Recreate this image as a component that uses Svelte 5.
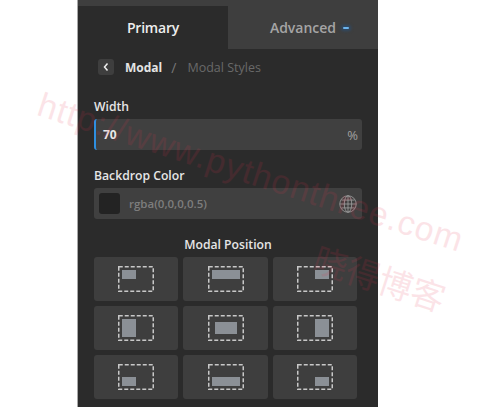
<script>
  const positions = [
    { name: "top-left", x: 4, y: 4, w: 14, h: 9 },
    { name: "top", x: 4, y: 4, w: 28, h: 9 },
    { name: "top-right", x: 18, y: 4, w: 14, h: 9 },
    { name: "left", x: 4, y: 4, w: 14, h: 18 },
    { name: "center", x: 7, y: 7, w: 22, h: 12 },
    { name: "right", x: 18, y: 4, w: 14, h: 18 },
    { name: "bottom-left", x: 4, y: 13, w: 14, h: 9 },
    { name: "bottom", x: 4, y: 13, w: 28, h: 9 },
    { name: "bottom-right", x: 18, y: 13, w: 14, h: 9 },
  ];
</script>

<div class="panel">
  <div class="tabs">
    <button class="tab active">Primary</button>
    <button class="tab">Advanced<span class="dot"></span></button>
  </div>

  <div class="crumbs">
    <button class="back" aria-label="Back">
      <svg width="8" height="10" viewBox="0 0 8 10"><path d="M5.500 1.500 2.500 5l3 3.500" fill="none" stroke="#eee" stroke-width="1.500" /></svg>
    </button>
    <span class="crumb-current">Modal</span>
    <span class="crumb-sep">/</span>
    <span class="crumb-next">Modal Styles</span>
  </div>

  <div class="label">Width</div>
  <div class="field width-field">
    <span class="value">70</span>
    <span class="unit">%</span>
  </div>

  <div class="label">Backdrop Color</div>
  <div class="field color-field">
    <span class="swatch"></span>
    <span class="color-text">rgba(0,0,0,0.5)</span>
    <svg class="globe" width="18" height="18" viewBox="0 0 17 17" fill="none" stroke="#a8a8a8" stroke-width="0.700">
      <circle cx="8.500" cy="8.500" r="7.800" />
      <ellipse cx="8.500" cy="8.500" rx="3.500" ry="7.800" />
      <path d="M8.500 1v15M1 8.500h15M2.200 4.800h12.600M2.200 12.200h12.600" />
    </svg>
  </div>

  <div class="position-title">Modal Position</div>
  <div class="grid">
    {#each positions as p}
      <button class="cell" aria-label={p.name}>
        <svg width="36" height="26" viewBox="0 0 36 26">
          <rect x="0.750" y="0.750" width="34.500" height="24.500" fill="none" stroke="#c8c8c8" stroke-width="1.500" stroke-dasharray="4 2" />
          <rect x={p.x} y={p.y} width={p.w} height={p.h} fill="#8b9096" />
        </svg>
      </button>
    {/each}
  </div>

  <div class="watermark url">http://www.pythonthree.com</div>
  <div class="watermark name">晓得博客</div>
</div>

<style>
  :global(body) {
    background: #fff;
    overflow: hidden;
  }
  .panel {
    box-sizing: border-box;
    width: 301px;
    height: 407px;
    margin-left: 77px;
    padding-top: 6px;
    background-color: #2b2b2b;
    background-image: linear-gradient(#3e3e3e, #3e3e3e);
    background-size: 100% 6px;
    background-repeat: no-repeat;
    border-left: 1px solid #a8a8a8;
    font-family: "Open Sans", "Noto Sans", sans-serif;
  }
  button {
    font-family: inherit;
    border: 0;
    padding: 0;
    cursor: pointer;
  }
  .tabs {
    display: flex;
    height: 43px;
  }
  .tab {
    flex: 1;
    font-size: 14px;
    font-weight: 600;
    color: #a5a5a5;
    background: #3e3e3e;
    position: relative;
  }
  .tab.active {
    letter-spacing: -0.200px;
    color: #eee;
    background: #2b2b2b;
  }
  .dot {
    position: absolute;
    left: 115px;
    top: 21px;
    width: 6px;
    height: 2px;
    background: #6cb4ee;
    box-shadow: 0 0 3px 2px #2f4a66;
    border-radius: 1px;
  }
  .crumbs {
    display: flex;
    align-items: center;
    height: 16px;
    margin: 10px 0 0 20px;
    font-size: 12px;
  }
  .back {
    display: flex;
    align-items: center;
    justify-content: center;
    width: 16px;
    height: 16px;
    background: #3e3e3e;
    border-radius: 3px;
    margin-right: 11px;
  }
  .crumb-current {
    color: #e4e4e4;
    font-weight: 700;
  }
  .crumb-sep {
    color: #777;
    font-size: 14px;
    margin: 0 11px 0 9px;
  }
  .crumb-next {
    color: #696969;
    font-size: 12.500px;
  }
  .label {
    margin: 24px 0 4px 16px;
    height: 16px;
    line-height: 16px;
    font-size: 12.200px;
    font-weight: 600;
    color: #e6e6e6;
  }
  .width-field + .label {
    margin-top: 18px;
  }
  .field {
    box-sizing: border-box;
    display: flex;
    align-items: center;
    width: 268px;
    height: 31px;
    margin-left: 16px;
    background: #404040;
    border-radius: 3px;
  }
  .width-field {
    border-left: 2px solid #2e8fe0;
    padding: 0 4px 0 7px;
    justify-content: space-between;
  }
  .value {
    color: #e8e8e8;
    font-size: 12px;
    font-weight: 700;
  }
  .unit {
    color: #a0a0a0;
    font-size: 13px;
  }
  .color-field {
    padding: 0 5px;
  }
  .swatch {
    width: 21px;
    height: 21px;
    background: #232323;
    border-radius: 3px;
    margin-right: 9px;
  }
  .color-text {
    flex: 1;
    color: #7d7d7d;
    font-size: 11.500px;
    font-weight: 600;
  }
  .position-title {
    margin-top: 18px;
    height: 16px;
    line-height: 16px;
    text-align: center;
    font-size: 12.200px;
    font-weight: 600;
    color: #e6e6e6;
  }
  .grid {
    display: grid;
    grid-template-columns: 84px 85px 84px;
    grid-auto-rows: 44px;
    gap: 5px;
    margin: 4px 0 0 16px;
  }
  .cell {
    display: flex;
    align-items: center;
    justify-content: center;
    background: #3e3e3e;
    border-radius: 3px;
  }
  .watermark {
    position: absolute;
    color: #e8324f;
    opacity: 0.13;
    white-space: nowrap;
    font-family: "Liberation Sans", sans-serif;
    transform-origin: left top;
    pointer-events: none;
  }
  .url {
    left: 45px;
    top: 85px;
    font-size: 34px;
    letter-spacing: 1px;
    transform: rotate(18deg);
  }
  .name {
    left: 323px;
    top: 233px;
    font-size: 34px;
    font-family: "Noto Sans CJK SC", sans-serif;
    transform: rotate(18deg);
  }
</style>
